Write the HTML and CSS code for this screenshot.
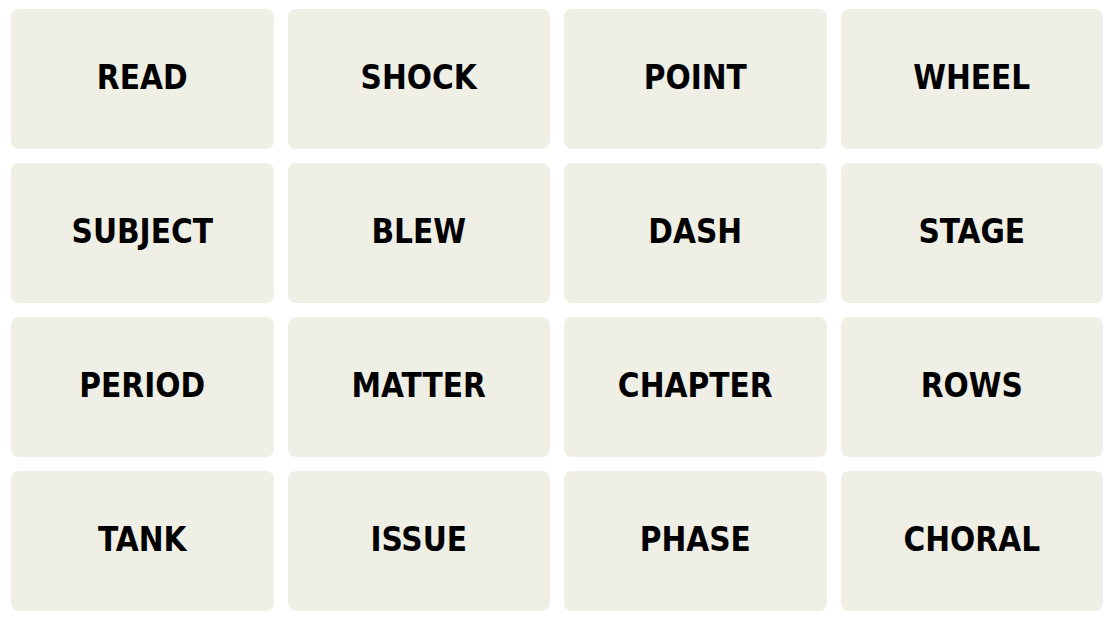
FILE: index.html
```html
<!DOCTYPE html>
<html lang="en">
<head>
<meta charset="utf-8">
<title>Connections</title>
<link rel="stylesheet" href="styles.css">
</head>
<body>
<main class="board">
  <button class="tile">READ</button>
  <button class="tile">SHOCK</button>
  <button class="tile">POINT</button>
  <button class="tile">WHEEL</button>
  <button class="tile">SUBJECT</button>
  <button class="tile">BLEW</button>
  <button class="tile">DASH</button>
  <button class="tile">STAGE</button>
  <button class="tile">PERIOD</button>
  <button class="tile">MATTER</button>
  <button class="tile">CHAPTER</button>
  <button class="tile">ROWS</button>
  <button class="tile">TANK</button>
  <button class="tile">ISSUE</button>
  <button class="tile">PHASE</button>
  <button class="tile">CHORAL</button>
</main>
</body>
</html>
```
FILE: styles.css
```css
html, body {
  margin: 0;
  padding: 0;
  background: #ffffff;
}

.board {
  display: grid;
  grid-template-columns: repeat(4, 1fr);
  grid-auto-rows: 140px;
  gap: 14px;
  width: 1092px;
  padding: 9px 0 0 11px;
}

.tile {
  border: none;
  border-radius: 8px;
  background: #efefe6;
  color: #000000;
  font-family: "DejaVu Sans Condensed", "DejaVu Sans", sans-serif;
  font-stretch: condensed;
  font-weight: 700;
  font-size: 33px;
  letter-spacing: 0;
  padding: 0 0 4px 0;
  display: flex;
  align-items: center;
  justify-content: center;
  cursor: pointer;
}
```
